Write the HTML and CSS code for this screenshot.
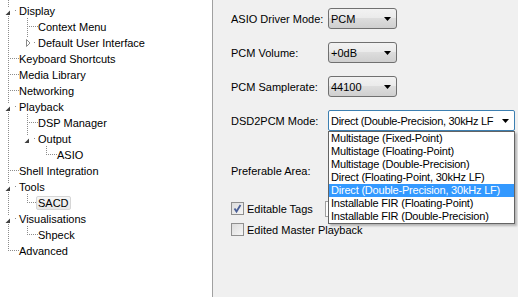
FILE: index.html
```html
<!DOCTYPE html>
<html>
<head>
<meta charset="utf-8">
<link rel="stylesheet" href="styles.css">
</head>
<body>
<div class="app">
  <div class="tree">
    <div class="row"><span class="c xo vfull"><svg width="19" height="16"><rect x="4" y="5" width="9" height="9" fill="#fff"/><polygon points="10,8.5 10,13 5.5,13" fill="#404040"/></svg></span><span class="txt">Display</span></div>
    <div class="row"><span class="c v"></span><span class="c t"></span><span class="txt">Context Menu</span></div>
    <div class="row"><span class="c v"></span><span class="c xc vhalf"><svg width="19" height="16"><rect x="4" y="4" width="9" height="9" fill="#fff"/><polygon points="7.5,5.5 11,9 7.5,12.5" fill="none" stroke="#8a8a8a"/></svg></span><span class="txt">Default User Interface</span></div>
    <div class="row"><span class="c t"></span><span class="txt">Keyboard Shortcuts</span></div>
    <div class="row"><span class="c t"></span><span class="txt">Media Library</span></div>
    <div class="row"><span class="c t"></span><span class="txt">Networking</span></div>
    <div class="row"><span class="c xo vfull"><svg width="19" height="16"><rect x="4" y="5" width="9" height="9" fill="#fff"/><polygon points="10,8.5 10,13 5.5,13" fill="#404040"/></svg></span><span class="txt">Playback</span></div>
    <div class="row"><span class="c v"></span><span class="c t"></span><span class="txt">DSP Manager</span></div>
    <div class="row"><span class="c v"></span><span class="c xo vhalf"><svg width="19" height="16"><rect x="4" y="5" width="9" height="9" fill="#fff"/><polygon points="10,8.5 10,13 5.5,13" fill="#404040"/></svg></span><span class="txt">Output</span></div>
    <div class="row"><span class="c v"></span><span class="c"></span><span class="c l"></span><span class="txt">ASIO</span></div>
    <div class="row"><span class="c t"></span><span class="txt">Shell Integration</span></div>
    <div class="row"><span class="c xo vfull"><svg width="19" height="16"><rect x="4" y="5" width="9" height="9" fill="#fff"/><polygon points="10,8.5 10,13 5.5,13" fill="#404040"/></svg></span><span class="txt">Tools</span></div>
    <div class="row"><span class="c v"></span><span class="c l"></span><span class="txt sel">SACD</span></div>
    <div class="row"><span class="c xo vfull"><svg width="19" height="16"><rect x="4" y="5" width="9" height="9" fill="#fff"/><polygon points="10,8.5 10,13 5.5,13" fill="#404040"/></svg></span><span class="txt">Visualisations</span></div>
    <div class="row"><span class="c v"></span><span class="c l"></span><span class="txt">Shpeck</span></div>
    <div class="row"><span class="c l"></span><span class="txt">Advanced</span></div>
  </div>
  <div class="panel">
    <div class="field">
      <span class="label">ASIO Driver Mode:</span>
      <div class="combo sm"><span class="val">PCM</span><svg class="arr" width="7" height="4"><polygon points="0,0 7,0 3.5,4" fill="#000"/></svg></div>
    </div>
    <div class="field">
      <span class="label">PCM Volume:</span>
      <div class="combo sm"><span class="val">+0dB</span><svg class="arr" width="7" height="4"><polygon points="0,0 7,0 3.5,4" fill="#000"/></svg></div>
    </div>
    <div class="field">
      <span class="label">PCM Samplerate:</span>
      <div class="combo sm"><span class="val">44100</span><svg class="arr" width="7" height="4"><polygon points="0,0 7,0 3.5,4" fill="#000"/></svg></div>
    </div>
    <div class="field">
      <span class="label">DSD2PCM Mode:</span>
      <div class="combo wide focus"><span class="val tight">Direct (Double-Precision, 30kHz LF</span><svg class="arr" width="7" height="4"><polygon points="0,0 7,0 3.5,4" fill="#000"/></svg>
        <div class="list">
          <div class="item">Multistage (Fixed-Point)</div>
          <div class="item">Multistage (Floating-Point)</div>
          <div class="item">Multistage (Double-Precision)</div>
          <div class="item">Direct (Floating-Point, 30kHz LF)</div>
          <div class="item hl">Direct (Double-Precision, 30kHz LF)</div>
          <div class="item">Installable FIR (Floating-Point)</div>
          <div class="item">Installable FIR (Double-Precision)</div>
        </div>
      </div>
    </div>
    <div class="field f5">
      <span class="label">Preferable Area:</span>
      <div class="combo wide"><span class="val"></span></div>
    </div>
    <div class="check c1">
      <span class="cwrap">
        <span class="box"><svg width="11" height="11"><path d="M2.5 5.5 L4.5 8.5 L8.5 2" fill="none" stroke="#4a5f97" stroke-width="1.8"/></svg></span>
        <span class="ctext">Editable Tags</span>
      </span>
      <span class="edit"></span>
    </div>
    <div class="check c2">
      <span class="cwrap">
        <span class="box"></span>
        <span class="ctext">Edited Master Playback</span>
      </span>
    </div>
  </div>
</div>
</body>
</html>
```

FILE: styles.css
```css
html, body {
  margin: 0;
  padding: 0;
}
body {
  font-family: "Liberation Sans", Arial, sans-serif;
  font-size: 11px;
  color: #000;
  width: 518px;
  height: 297px;
  overflow: hidden;
}
.app {
  display: flex;
  height: 297px;
}
.tree {
  width: 212px;
  flex: none;
  background-color: #fff;
  background-image: repeating-linear-gradient(to bottom, #8c8c8c 0 1px, transparent 1px 2px);
  background-size: 1px 2px;
  background-position: 8px 0;
  background-repeat: no-repeat;
  padding-top: 2px;
  box-sizing: border-box;
}
.row {
  display: flex;
  height: 16px;
  align-items: flex-start;
}
.c {
  width: 19px;
  height: 16px;
  flex: none;
  display: block;
  background-repeat: no-repeat;
}
.c svg {
  display: block;
}
.v {
  background-image: repeating-linear-gradient(to bottom, #8c8c8c 0 1px, transparent 1px 2px);
  background-size: 1px 16px;
  background-position: 8px 0;
}
.t {
  background-image:
    repeating-linear-gradient(to bottom, #8c8c8c 0 1px, transparent 1px 2px),
    repeating-linear-gradient(to right, #8c8c8c 0 1px, transparent 1px 2px);
  background-size: 1px 16px, 9px 1px;
  background-position: 8px 0, 10px 8px;
}
.l {
  background-image:
    repeating-linear-gradient(to bottom, #8c8c8c 0 1px, transparent 1px 2px),
    repeating-linear-gradient(to right, #8c8c8c 0 1px, transparent 1px 2px);
  background-size: 1px 9px, 9px 1px;
  background-position: 8px 0, 10px 8px;
}
.xo.vfull, .xc.vfull {
  background-image:
    repeating-linear-gradient(to bottom, #8c8c8c 0 1px, transparent 1px 2px),
    linear-gradient(#8c8c8c, #8c8c8c);
  background-size: 1px 16px, 1px 1px;
  background-position: 8px 0, 15px 8px;
}
.xo.vhalf, .xc.vhalf {
  background-image:
    repeating-linear-gradient(to bottom, #8c8c8c 0 1px, transparent 1px 2px),
    linear-gradient(#8c8c8c, #8c8c8c);
  background-size: 1px 8px, 1px 1px;
  background-position: 8px 0, 15px 8px;
}
.txt {
  white-space: nowrap;
  line-height: 14px;
  padding: 2px 1px 0 1px;
  margin-left: -1px;
}
.sel {
  background: linear-gradient(#f7f7f7, #e7e7e7);
  border: 1px solid #d6d6d6;
  border-radius: 2px;
  padding: 0 1px 0 1px;
  margin-left: -2px;
  margin-top: 2px;
  line-height: 12px;
}

.panel {
  flex: 1;
  background: #f0f0f0;
  border-left: 1px solid #a0a0a0;
  padding: 8px 0 0 18px;
  display: flex;
  flex-direction: column;
}
.field {
  display: flex;
  align-items: center;
  height: 21px;
  margin-bottom: 13px;
}
.field.f5 {
  margin-top: 16px;
  margin-bottom: 20px;
}
.label {
  width: 97px;
  flex: none;
  white-space: nowrap;
}
.combo {
  position: relative;
  height: 21px;
  box-sizing: border-box;
  border: 1px solid #707070;
  border-radius: 3px;
  background: linear-gradient(#f2f2f2 0%, #ebebeb 45%, #dddddd 50%, #cfcfcf 100%);
  display: flex;
  align-items: center;
  padding-left: 2px;
}
.combo.sm {
  width: 69px;
}
.combo.wide {
  width: 187px;
}
.combo.focus {
  background: #fff;
  border-color: #3c7fb1;
  border-radius: 2px;
}
.val {
  flex: 1;
  white-space: nowrap;
  overflow: hidden;
}
.val.tight {
  letter-spacing: -0.3px;
}
.arr {
  flex: none;
  margin: 0 5px 0 4px;
}
.list {
  position: absolute;
  left: -1px;
  top: 20px;
  width: 185px;
  background: #fff;
  border: 1px solid #646464;
  box-shadow: 2px 2px 2px rgba(0, 0, 0, 0.25);
  z-index: 5;
}
.item {
  height: 13px;
  line-height: 13px;
  padding-left: 2px;
  white-space: nowrap;
  letter-spacing: -0.2px;
}
.item.hl {
  background: #3399ff;
  color: #fff;
}
.check {
  display: flex;
  align-items: center;
  height: 15px;
}
.check.c1 {
  margin-bottom: 6px;
}
.cwrap {
  width: 94px;
  flex: none;
  display: flex;
  align-items: center;
}
.box {
  width: 13px;
  height: 13px;
  box-sizing: border-box;
  border: 1px solid #8f8f8f;
  background: linear-gradient(135deg, #dcdcdc, #f6f6f6);
  flex: none;
  display: flex;
  align-items: center;
  justify-content: center;
}
.box svg {
  display: block;
}
.ctext {
  margin-left: 3px;
  white-space: nowrap;
}
.edit {
  width: 40px;
  height: 16px;
  box-sizing: border-box;
  border: 1px solid #a0a0a0;
  background: #fff;
}
```
